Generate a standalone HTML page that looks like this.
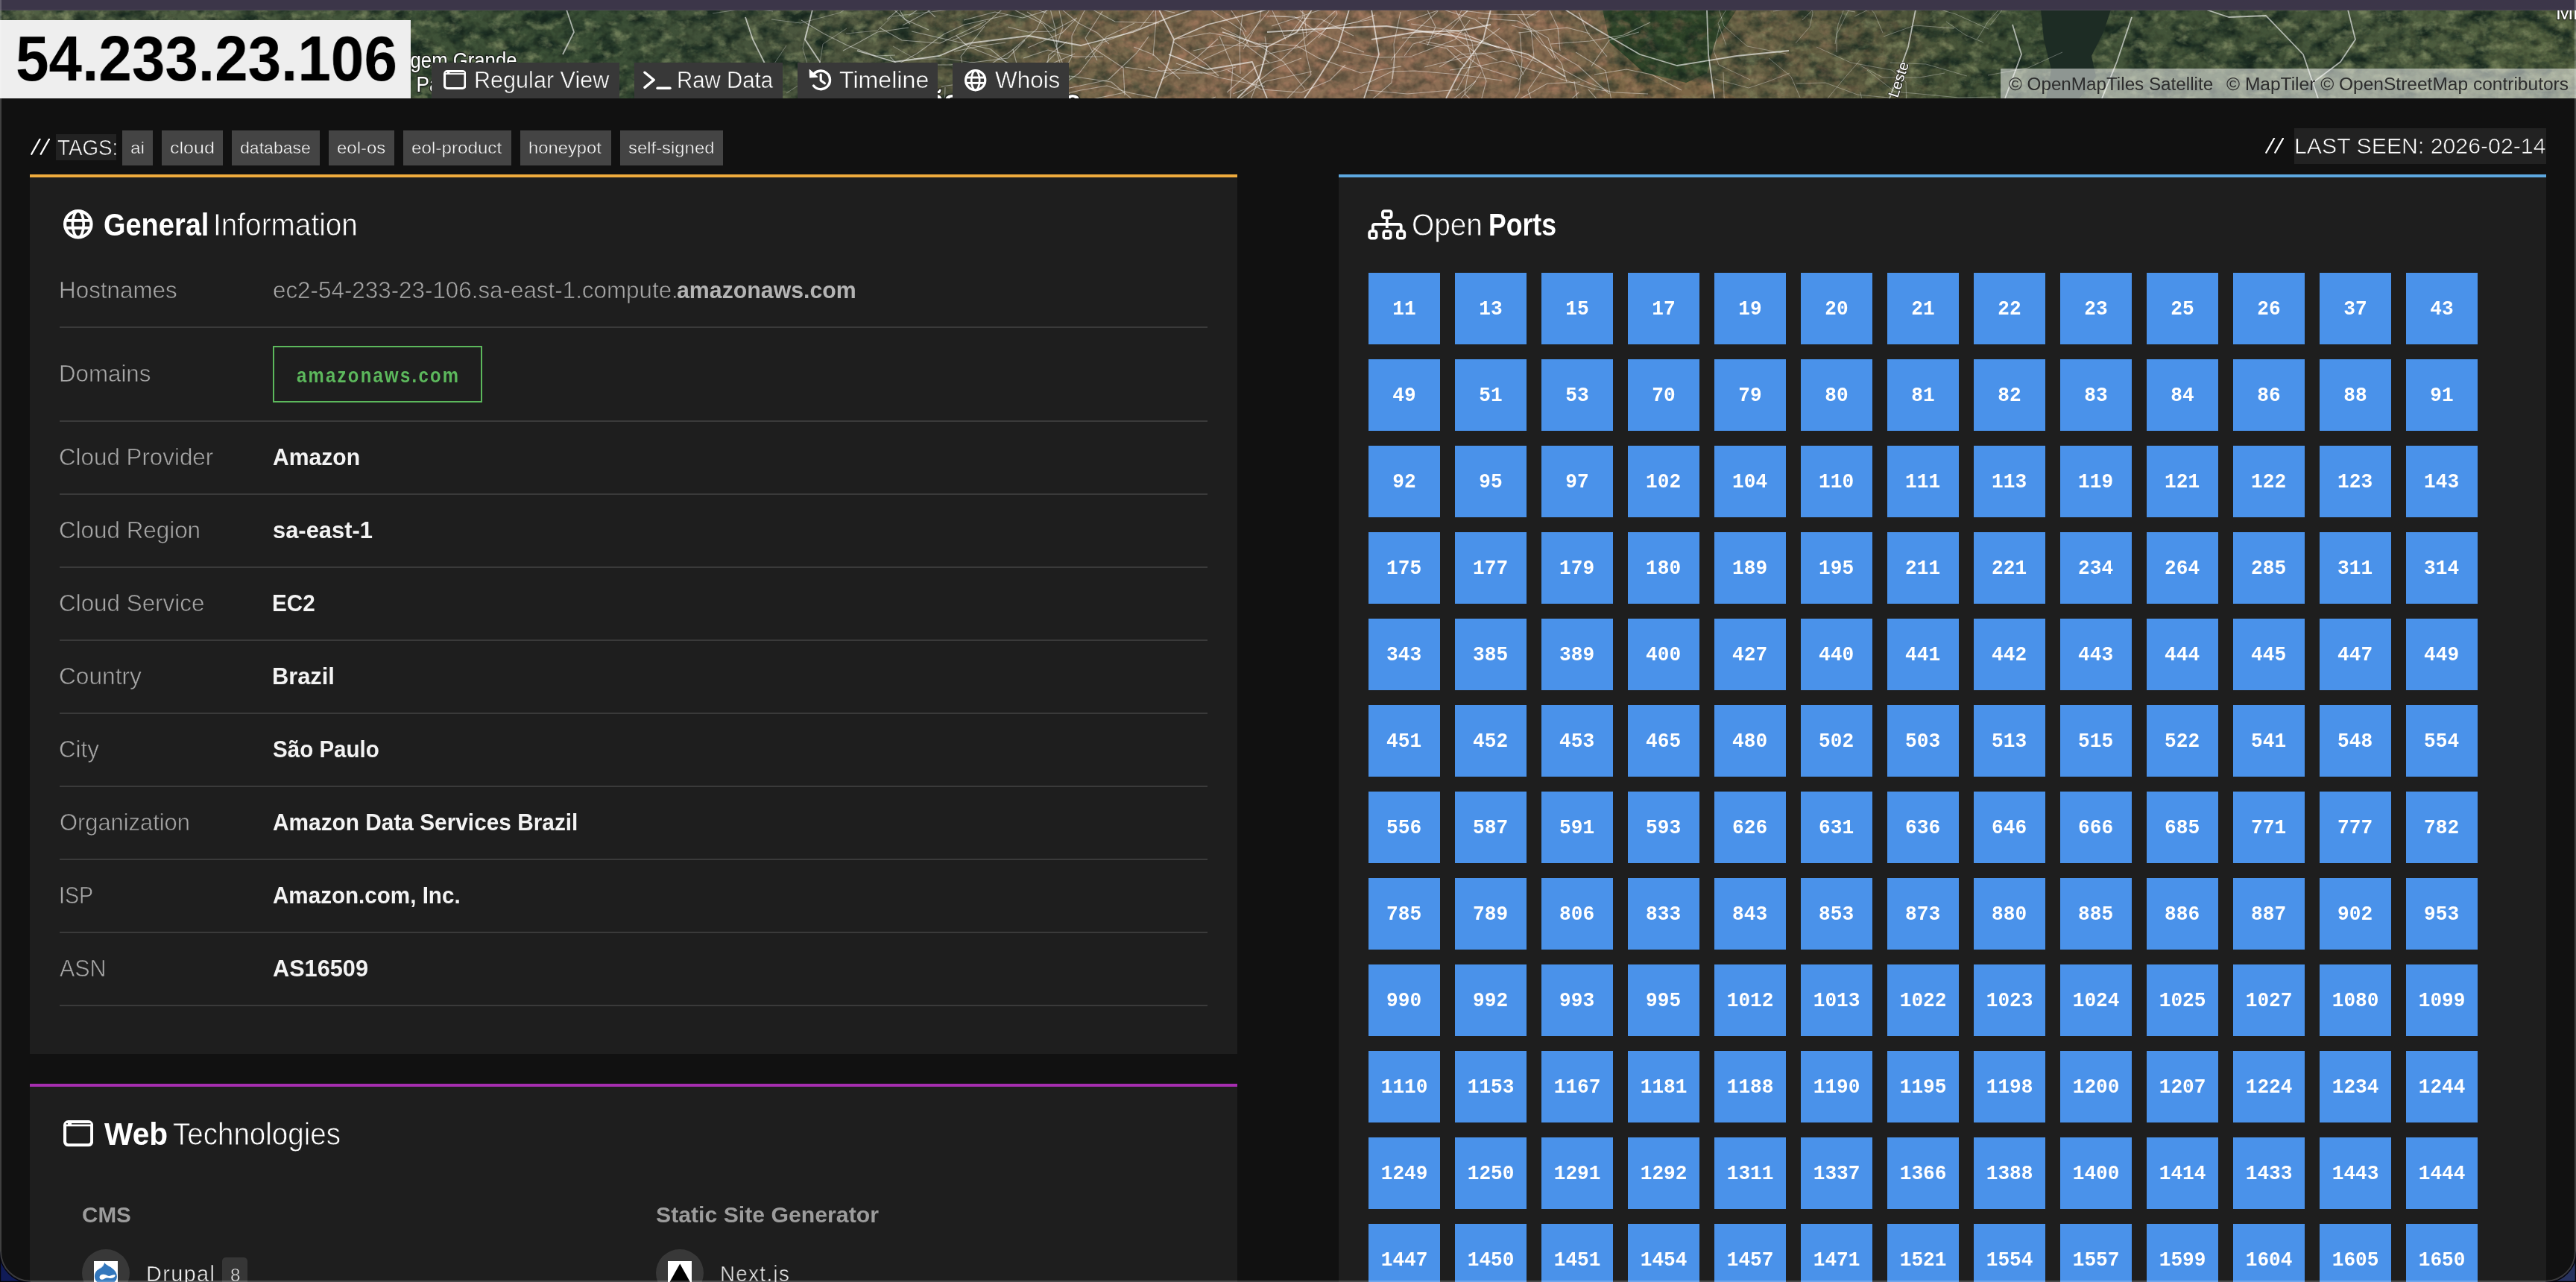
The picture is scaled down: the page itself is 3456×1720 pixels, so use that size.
<!DOCTYPE html>
<html lang="en"><head><meta charset="utf-8"><title>54.233.23.106</title>
<style>
html,body{margin:0;padding:0;background:#111;}
body{width:3456px;height:1720px;position:relative;overflow:hidden;font-family:"Liberation Sans",sans-serif;}
#w{position:absolute;left:0;top:0;width:3456px;height:1720px;will-change:transform;}
.a{position:absolute;}
.t{position:absolute;white-space:pre;line-height:1;transform-origin:0 0;}
.card{position:absolute;background:#1e1e1e;}
.hr{position:absolute;left:80px;width:1540px;height:2px;background:#3a3a3a;}
.tag{position:absolute;top:175px;height:47px;background:#444;}
.btn{position:absolute;top:84px;height:48px;background:#383838;}
.p{position:absolute;width:96px;height:96px;background:#4a92ea;color:#fff;font-family:"Liberation Mono",monospace;font-weight:700;font-size:28.4px;line-height:97px;text-align:center;}
.p b{display:inline-block;transform:scaleX(.92);}

</style></head><body><div id="w">
<svg class="a" style="left:0;top:13px" width="3456" height="119" viewBox="0 0 3456 119">
<defs><linearGradient id="mg" x1="0" y1="0" x2="1" y2="0">
<stop offset="0.0000" stop-color="#526044"/>
<stop offset="0.0868" stop-color="#4a5a3f"/>
<stop offset="0.1594" stop-color="#3f5238"/>
<stop offset="0.2315" stop-color="#394e35"/>
<stop offset="0.2778" stop-color="#42523a"/>
<stop offset="0.3067" stop-color="#4a563e"/>
<stop offset="0.3414" stop-color="#545a41"/>
<stop offset="0.3819" stop-color="#625e44"/>
<stop offset="0.4196" stop-color="#74664a"/>
<stop offset="0.4514" stop-color="#816b4f"/>
<stop offset="0.4919" stop-color="#886c52"/>
<stop offset="0.5498" stop-color="#8b6d54"/>
<stop offset="0.6019" stop-color="#876c51"/>
<stop offset="0.6250" stop-color="#76674a"/>
<stop offset="0.6539" stop-color="#686345"/>
<stop offset="0.6887" stop-color="#6a6346"/>
<stop offset="0.7234" stop-color="#5c5c40"/>
<stop offset="0.7523" stop-color="#4a563a"/>
<stop offset="0.7856" stop-color="#3e5036"/>
<stop offset="0.8247" stop-color="#44553a"/>
<stop offset="0.8681" stop-color="#415238"/>
<stop offset="0.9259" stop-color="#4a5a3e"/>
<stop offset="1.0000" stop-color="#52603f"/>
</linearGradient>
<linearGradient id="mk" x1="0" y1="0" x2="1" y2="0">
<stop offset="0.0000" stop-color="rgb(255,255,255)"/>
<stop offset="0.3328" stop-color="rgb(255,255,255)"/>
<stop offset="0.4196" stop-color="rgb(153,153,153)"/>
<stop offset="0.4514" stop-color="rgb(102,102,102)"/>
<stop offset="0.6019" stop-color="rgb(102,102,102)"/>
<stop offset="0.6366" stop-color="rgb(191,191,191)"/>
<stop offset="0.7378" stop-color="rgb(204,204,204)"/>
<stop offset="0.7668" stop-color="rgb(255,255,255)"/>
<stop offset="1.0000" stop-color="rgb(255,255,255)"/>
</linearGradient><mask id="dm"><rect width="3456" height="119" fill="url(#mk)"/></mask>
<filter id="nd" x="0" y="0" width="100%" height="100%" color-interpolation-filters="sRGB"><feTurbulence type="fractalNoise" baseFrequency="0.035 0.05" numOctaves="4" seed="11"/><feColorMatrix type="matrix" values="0 0 0 0 0.10  0 0 0 0 0.17  0 0 0 0 0.13  2.8 0 0 0 -1.22"/></filter>
<filter id="nl" x="0" y="0" width="100%" height="100%" color-interpolation-filters="sRGB"><feTurbulence type="fractalNoise" baseFrequency="0.05 0.07" numOctaves="4" seed="29"/><feColorMatrix type="matrix" values="0 0 0 0 0.60  0 0 0 0 0.64  0 0 0 0 0.46  0 3.0 0 0 -1.55"/></filter>
<filter id="nu" x="0" y="0" width="100%" height="100%" color-interpolation-filters="sRGB"><feTurbulence type="fractalNoise" baseFrequency="0.05 0.07" numOctaves="4" seed="31"/><feColorMatrix type="matrix" values="0 0 0 0 0.70  0 0 0 0 0.50  0 0 0 0 0.40  0 3.0 0 0 -1.5"/></filter>
<linearGradient id="mk2" x1="0" y1="0" x2="1" y2="0">
<stop offset="0.0000" stop-color="rgb(0,0,0)"/>
<stop offset="0.3328" stop-color="rgb(0,0,0)"/>
<stop offset="0.4051" stop-color="rgb(127,127,127)"/>
<stop offset="0.4514" stop-color="rgb(255,255,255)"/>
<stop offset="0.6076" stop-color="rgb(255,255,255)"/>
<stop offset="0.6510" stop-color="rgb(127,127,127)"/>
<stop offset="0.7234" stop-color="rgb(114,114,114)"/>
<stop offset="0.7668" stop-color="rgb(0,0,0)"/>
<stop offset="1.0000" stop-color="rgb(0,0,0)"/>
</linearGradient><mask id="um"><rect width="3456" height="119" fill="url(#mk2)"/></mask>
<linearGradient id="mk3" x1="0" y1="0" x2="1" y2="0">
<stop offset="0.0000" stop-color="rgb(255,255,255)"/>
<stop offset="0.3472" stop-color="rgb(255,255,255)"/>
<stop offset="0.4514" stop-color="rgb(38,38,38)"/>
<stop offset="0.6076" stop-color="rgb(38,38,38)"/>
<stop offset="0.6510" stop-color="rgb(153,153,153)"/>
<stop offset="0.7523" stop-color="rgb(255,255,255)"/>
<stop offset="1.0000" stop-color="rgb(255,255,255)"/>
</linearGradient><mask id="gm"><rect width="3456" height="119" fill="url(#mk3)"/></mask>
<filter id="ng" x="0" y="0" width="100%" height="100%" color-interpolation-filters="sRGB"><feTurbulence type="fractalNoise" baseFrequency="0.12" numOctaves="2" seed="5"/><feColorMatrix type="matrix" values="0 0 0 0 0  0 0 0 0 0  0 0 0 0 0  0 0 1.4 0 -0.6"/></filter>
</defs>
<rect width="3456" height="119" fill="url(#mg)"/>
<path d="M2150 119 L2150 70 L2290 95 L2330 119Z" fill="#7d6848"/>
<path d="M2150 0 L2330 0 L2300 45 L2290 85 L2262 98 L2205 84 L2160 44Z" fill="#2f4529"/>
<g mask="url(#dm)"><rect width="3456" height="119" filter="url(#nd)"/></g>
<g mask="url(#gm)"><rect width="3456" height="119" filter="url(#nl)" opacity=".55"/></g>
<g mask="url(#um)"><rect width="3456" height="119" filter="url(#nu)" opacity=".6"/></g>
<rect width="3456" height="119" filter="url(#ng)" opacity=".35"/>
<path d="M2738 0 L2832 0 L2822 30 L2806 62 L2812 90 L2790 119 L2745 119 L2752 80 L2742 40Z" fill="#1d2c24"/>
<polyline points="1150,55 1200,70 1260,62 1300,45 1380,35 1450,48 1520,30 1570,10 1600,0" fill="none" stroke="#fff" stroke-width="1.8" stroke-opacity="0.60" stroke-linejoin="round"/>
<polyline points="1555,0 1575,40 1568,70 1550,119" fill="none" stroke="#fff" stroke-width="1.8" stroke-opacity="0.60" stroke-linejoin="round"/>
<polyline points="1575,40 1620,20 1680,5 1700,0" fill="none" stroke="#fff" stroke-width="1.8" stroke-opacity="0.60" stroke-linejoin="round"/>
<polyline points="1568,60 1620,80 1680,70 1700,119" fill="none" stroke="#fff" stroke-width="1.8" stroke-opacity="0.60" stroke-linejoin="round"/>
<polyline points="1640,30 1700,50 1690,90 1660,119" fill="none" stroke="#fff" stroke-width="1.8" stroke-opacity="0.60" stroke-linejoin="round"/>
<polyline points="1700,50 1740,30 1760,0" fill="none" stroke="#fff" stroke-width="1.8" stroke-opacity="0.60" stroke-linejoin="round"/>
<polyline points="1810,0 1795,50 1770,90 1750,119" fill="none" stroke="#fff" stroke-width="1.8" stroke-opacity="0.60" stroke-linejoin="round"/>
<polyline points="1840,40 1900,30 1960,28 2000,20" fill="none" stroke="#fff" stroke-width="1.8" stroke-opacity="0.60" stroke-linejoin="round"/>
<polyline points="1840,0 1850,60 1830,119" fill="none" stroke="#fff" stroke-width="1.8" stroke-opacity="0.60" stroke-linejoin="round"/>
<polyline points="1700,30 1780,25 1860,22 1950,35 2050,60 2100,90" fill="none" stroke="#fff" stroke-width="1.8" stroke-opacity="0.60" stroke-linejoin="round"/>
<polyline points="2000,0 1990,40 1960,80 1940,119" fill="none" stroke="#fff" stroke-width="1.8" stroke-opacity="0.60" stroke-linejoin="round"/>
<polyline points="2100,0 2140,25 2200,60 2250,75 2330,62 2400,55" fill="none" stroke="#fff" stroke-width="1.8" stroke-opacity="0.60" stroke-linejoin="round"/>
<polyline points="2290,0 2292,60 2300,119" fill="none" stroke="#fff" stroke-width="1.8" stroke-opacity="0.60" stroke-linejoin="round"/>
<polyline points="2570,0 2560,50 2535,119" fill="none" stroke="#fff" stroke-width="1.8" stroke-opacity="0.60" stroke-linejoin="round"/>
<polyline points="2700,20 2712,60 2690,119" fill="none" stroke="#fff" stroke-width="1.8" stroke-opacity="0.60" stroke-linejoin="round"/>
<polyline points="2860,10 2840,70 2820,119" fill="none" stroke="#fff" stroke-width="1.8" stroke-opacity="0.60" stroke-linejoin="round"/>
<polyline points="2960,0 2990,10 3040,8 3090,60 3110,119" fill="none" stroke="#fff" stroke-width="1.8" stroke-opacity="0.60" stroke-linejoin="round"/>
<polyline points="3150,0 3160,40 3140,70 3100,100" fill="none" stroke="#fff" stroke-width="1.8" stroke-opacity="0.60" stroke-linejoin="round"/>
<polyline points="1000,10 1010,40 1030,80" fill="none" stroke="#fff" stroke-width="1.8" stroke-opacity="0.60" stroke-linejoin="round"/>
<polyline points="760,0 770,30 755,60" fill="none" stroke="#fff" stroke-width="1.8" stroke-opacity="0.60" stroke-linejoin="round"/>
<polyline points="1090,0 1080,40 1100,70 1085,119" fill="none" stroke="#fff" stroke-width="1.8" stroke-opacity="0.60" stroke-linejoin="round"/>
<polyline points="1614,67 1668,43 1699,6 1723,-27" fill="none" stroke="#fff" stroke-width="1.1" stroke-opacity="0.42" stroke-linejoin="round"/>
<polyline points="1359,53 1369,92 1424,121 1433,159 1433,181" fill="none" stroke="#fff" stroke-width="1.1" stroke-opacity="0.42" stroke-linejoin="round"/>
<polyline points="1194,63 1223,93 1229,121" fill="none" stroke="#fff" stroke-width="1.1" stroke-opacity="0.42" stroke-linejoin="round"/>
<polyline points="1747,23 1753,61 1759,87 1719,127" fill="none" stroke="#fff" stroke-width="1.1" stroke-opacity="0.42" stroke-linejoin="round"/>
<polyline points="1987,84 1976,101 1960,119" fill="none" stroke="#fff" stroke-width="1.1" stroke-opacity="0.42" stroke-linejoin="round"/>
<polyline points="1283,35 1298,49 1355,72" fill="none" stroke="#fff" stroke-width="1.1" stroke-opacity="0.42" stroke-linejoin="round"/>
<polyline points="1631,117 1602,129 1563,136" fill="none" stroke="#fff" stroke-width="1.1" stroke-opacity="0.42" stroke-linejoin="round"/>
<polyline points="1479,2 1456,38 1472,68" fill="none" stroke="#fff" stroke-width="1.1" stroke-opacity="0.42" stroke-linejoin="round"/>
<polyline points="1647,81 1692,107 1746,111 1784,95 1805,74" fill="none" stroke="#fff" stroke-width="1.1" stroke-opacity="0.42" stroke-linejoin="round"/>
<polyline points="2112,96 2117,125 2094,159" fill="none" stroke="#fff" stroke-width="1.1" stroke-opacity="0.42" stroke-linejoin="round"/>
<polyline points="1276,118 1321,137 1341,163 1372,173" fill="none" stroke="#fff" stroke-width="1.1" stroke-opacity="0.42" stroke-linejoin="round"/>
<polyline points="1791,2 1749,39 1718,68 1687,75 1646,111" fill="none" stroke="#fff" stroke-width="1.1" stroke-opacity="0.42" stroke-linejoin="round"/>
<polyline points="1965,30 1974,64 1968,94 1965,113 1983,130" fill="none" stroke="#fff" stroke-width="1.1" stroke-opacity="0.42" stroke-linejoin="round"/>
<polyline points="1672,30 1645,-9 1633,-34 1592,-62" fill="none" stroke="#fff" stroke-width="1.1" stroke-opacity="0.42" stroke-linejoin="round"/>
<polyline points="1246,27 1214,13 1202,-9 1169,-21 1143,-27" fill="none" stroke="#fff" stroke-width="1.1" stroke-opacity="0.42" stroke-linejoin="round"/>
<polyline points="1349,44 1319,48 1280,56" fill="none" stroke="#fff" stroke-width="1.1" stroke-opacity="0.42" stroke-linejoin="round"/>
<polyline points="1884,62 1896,46 1947,30 1972,36 2012,52" fill="none" stroke="#fff" stroke-width="1.1" stroke-opacity="0.42" stroke-linejoin="round"/>
<polyline points="1881,38 1923,36 1969,2" fill="none" stroke="#fff" stroke-width="1.1" stroke-opacity="0.42" stroke-linejoin="round"/>
<polyline points="1888,15 1938,-2 2001,6 2061,7" fill="none" stroke="#fff" stroke-width="1.1" stroke-opacity="0.42" stroke-linejoin="round"/>
<polyline points="2009,68 1988,58 1959,60 1931,77" fill="none" stroke="#fff" stroke-width="1.1" stroke-opacity="0.42" stroke-linejoin="round"/>
<polyline points="1580,39 1623,31 1650,36 1671,47 1703,71" fill="none" stroke="#fff" stroke-width="1.1" stroke-opacity="0.42" stroke-linejoin="round"/>
<polyline points="1401,83 1355,75 1329,53 1279,42 1223,29" fill="none" stroke="#fff" stroke-width="1.1" stroke-opacity="0.42" stroke-linejoin="round"/>
<polyline points="1509,111 1456,122 1424,143" fill="none" stroke="#fff" stroke-width="1.1" stroke-opacity="0.42" stroke-linejoin="round"/>
<polyline points="1954,109 1978,65 1975,44 1953,1" fill="none" stroke="#fff" stroke-width="1.1" stroke-opacity="0.42" stroke-linejoin="round"/>
<polyline points="1219,8 1253,-14 1315,-17" fill="none" stroke="#fff" stroke-width="1.1" stroke-opacity="0.42" stroke-linejoin="round"/>
<polyline points="1547,62 1551,14 1550,-6 1505,-39 1449,-41" fill="none" stroke="#fff" stroke-width="1.1" stroke-opacity="0.42" stroke-linejoin="round"/>
<polyline points="1728,37 1748,10 1747,-32" fill="none" stroke="#fff" stroke-width="1.1" stroke-opacity="0.42" stroke-linejoin="round"/>
<polyline points="1436,93 1426,73 1412,37 1399,19 1348,-6" fill="none" stroke="#fff" stroke-width="1.1" stroke-opacity="0.42" stroke-linejoin="round"/>
<polyline points="1426,85 1438,63 1438,35 1454,3 1483,-33" fill="none" stroke="#fff" stroke-width="1.1" stroke-opacity="0.42" stroke-linejoin="round"/>
<polyline points="1558,94 1606,64 1634,39" fill="none" stroke="#fff" stroke-width="1.1" stroke-opacity="0.42" stroke-linejoin="round"/>
<polyline points="1369,106 1433,112 1487,140 1533,161 1590,165" fill="none" stroke="#fff" stroke-width="1.1" stroke-opacity="0.42" stroke-linejoin="round"/>
<polyline points="1966,76 1941,52 1904,44" fill="none" stroke="#fff" stroke-width="1.1" stroke-opacity="0.42" stroke-linejoin="round"/>
<polyline points="2118,111 2093,134 2094,165 2091,207 2090,225" fill="none" stroke="#fff" stroke-width="1.1" stroke-opacity="0.42" stroke-linejoin="round"/>
<polyline points="1957,8 1977,-29 2016,-45" fill="none" stroke="#fff" stroke-width="1.1" stroke-opacity="0.42" stroke-linejoin="round"/>
<polyline points="2140,107 2078,88 2016,69 1982,76 1945,81" fill="none" stroke="#fff" stroke-width="1.1" stroke-opacity="0.42" stroke-linejoin="round"/>
<polyline points="1880,76 1826,85 1769,65 1739,48 1689,45" fill="none" stroke="#fff" stroke-width="1.1" stroke-opacity="0.42" stroke-linejoin="round"/>
<polyline points="1442,59 1398,78 1380,125" fill="none" stroke="#fff" stroke-width="1.1" stroke-opacity="0.42" stroke-linejoin="round"/>
<polyline points="1675,48 1667,28 1618,-4 1567,-34 1550,-61" fill="none" stroke="#fff" stroke-width="1.1" stroke-opacity="0.42" stroke-linejoin="round"/>
<polyline points="1416,59 1399,76 1387,92 1382,132" fill="none" stroke="#fff" stroke-width="1.1" stroke-opacity="0.42" stroke-linejoin="round"/>
<polyline points="2118,4 2130,31 2156,63" fill="none" stroke="#fff" stroke-width="1.1" stroke-opacity="0.42" stroke-linejoin="round"/>
<polyline points="1281,87 1313,120 1331,163 1377,182 1403,214" fill="none" stroke="#fff" stroke-width="1.1" stroke-opacity="0.42" stroke-linejoin="round"/>
<polyline points="1697,103 1635,91 1578,72" fill="none" stroke="#fff" stroke-width="1.1" stroke-opacity="0.42" stroke-linejoin="round"/>
<polyline points="1403,88 1407,61 1431,43" fill="none" stroke="#fff" stroke-width="1.1" stroke-opacity="0.42" stroke-linejoin="round"/>
<polyline points="2138,106 2166,111 2211,113" fill="none" stroke="#fff" stroke-width="1.1" stroke-opacity="0.42" stroke-linejoin="round"/>
<polyline points="2084,65 2060,29 2028,21" fill="none" stroke="#fff" stroke-width="1.1" stroke-opacity="0.42" stroke-linejoin="round"/>
<polyline points="1835,108 1888,113 1958,107" fill="none" stroke="#fff" stroke-width="1.1" stroke-opacity="0.42" stroke-linejoin="round"/>
<polyline points="1980,96 1947,122 1913,148" fill="none" stroke="#fff" stroke-width="1.1" stroke-opacity="0.42" stroke-linejoin="round"/>
<polyline points="1321,22 1289,63 1293,82" fill="none" stroke="#fff" stroke-width="1.1" stroke-opacity="0.42" stroke-linejoin="round"/>
<polyline points="2093,55 2090,24 2079,1 2053,-31" fill="none" stroke="#fff" stroke-width="1.1" stroke-opacity="0.42" stroke-linejoin="round"/>
<polyline points="1219,24 1177,30 1152,44 1131,55" fill="none" stroke="#fff" stroke-width="1.1" stroke-opacity="0.42" stroke-linejoin="round"/>
<polyline points="2037,95 2058,63 2054,27 2035,-12 2016,-28" fill="none" stroke="#fff" stroke-width="1.1" stroke-opacity="0.42" stroke-linejoin="round"/>
<polyline points="1893,19 1956,29 2008,50" fill="none" stroke="#fff" stroke-width="1.1" stroke-opacity="0.42" stroke-linejoin="round"/>
<polyline points="1915,48 1926,23 1905,-20" fill="none" stroke="#fff" stroke-width="1.1" stroke-opacity="0.42" stroke-linejoin="round"/>
<polyline points="2131,107 2160,140 2199,167 2231,193" fill="none" stroke="#fff" stroke-width="1.1" stroke-opacity="0.42" stroke-linejoin="round"/>
<polyline points="1554,119 1513,111 1485,102 1450,108 1405,118" fill="none" stroke="#fff" stroke-width="1.1" stroke-opacity="0.42" stroke-linejoin="round"/>
<polyline points="1911,77 1973,62 2019,54 2064,71" fill="none" stroke="#fff" stroke-width="1.1" stroke-opacity="0.42" stroke-linejoin="round"/>
<polyline points="2135,76 2159,41 2199,30" fill="none" stroke="#fff" stroke-width="1.1" stroke-opacity="0.42" stroke-linejoin="round"/>
<polyline points="2081,46 2133,42 2178,34 2214,17" fill="none" stroke="#fff" stroke-width="1.1" stroke-opacity="0.42" stroke-linejoin="round"/>
<polyline points="1480,63 1442,63 1406,54 1373,65" fill="none" stroke="#fff" stroke-width="1.1" stroke-opacity="0.42" stroke-linejoin="round"/>
<polyline points="1221,19 1196,-3 1158,-26 1139,-51" fill="none" stroke="#fff" stroke-width="1.1" stroke-opacity="0.42" stroke-linejoin="round"/>
<polyline points="1946,27 1965,5 2003,-33 2041,-52" fill="none" stroke="#fff" stroke-width="1.1" stroke-opacity="0.42" stroke-linejoin="round"/>
<polyline points="2120,97 2076,99 2026,127" fill="none" stroke="#fff" stroke-width="1.1" stroke-opacity="0.42" stroke-linejoin="round"/>
<polyline points="1522,18 1485,36 1456,66" fill="none" stroke="#fff" stroke-width="1.1" stroke-opacity="0.42" stroke-linejoin="round"/>
<polyline points="1583,93 1547,60 1521,50" fill="none" stroke="#fff" stroke-width="1.1" stroke-opacity="0.42" stroke-linejoin="round"/>
<polyline points="2037,93 1989,78 1949,50 1913,43" fill="none" stroke="#fff" stroke-width="1.1" stroke-opacity="0.42" stroke-linejoin="round"/>
<polyline points="1410,113 1360,85 1332,86 1292,99 1263,103" fill="none" stroke="#fff" stroke-width="1.1" stroke-opacity="0.42" stroke-linejoin="round"/>
<polyline points="1700,9 1736,9 1769,31 1804,46 1830,57" fill="none" stroke="#fff" stroke-width="1.1" stroke-opacity="0.42" stroke-linejoin="round"/>
<polyline points="2015,95 1957,87 1898,82 1867,83 1815,108" fill="none" stroke="#fff" stroke-width="1.1" stroke-opacity="0.42" stroke-linejoin="round"/>
<polyline points="1753,35 1750,6 1709,-29" fill="none" stroke="#fff" stroke-width="1.1" stroke-opacity="0.42" stroke-linejoin="round"/>
<polyline points="1255,10 1227,-15 1223,-33 1195,-75" fill="none" stroke="#fff" stroke-width="1.1" stroke-opacity="0.42" stroke-linejoin="round"/>
<polyline points="1760,83 1698,96 1658,123 1625,162 1614,193" fill="none" stroke="#fff" stroke-width="1.1" stroke-opacity="0.42" stroke-linejoin="round"/>
<polyline points="1751,107 1722,70 1694,51 1638,24" fill="none" stroke="#fff" stroke-width="1.1" stroke-opacity="0.42" stroke-linejoin="round"/>
<polyline points="2039,30 2042,68 2038,111 2019,137" fill="none" stroke="#fff" stroke-width="1.1" stroke-opacity="0.42" stroke-linejoin="round"/>
<polyline points="1555,18 1496,16 1466,-0" fill="none" stroke="#fff" stroke-width="1.1" stroke-opacity="0.42" stroke-linejoin="round"/>
<polyline points="1201,61 1175,62 1137,48 1105,32 1075,14" fill="none" stroke="#fff" stroke-width="1.1" stroke-opacity="0.42" stroke-linejoin="round"/>
<polyline points="1443,13 1425,31 1379,51" fill="none" stroke="#fff" stroke-width="1.1" stroke-opacity="0.42" stroke-linejoin="round"/>
<polyline points="1416,26 1408,-5 1384,-45 1365,-62 1326,-95" fill="none" stroke="#fff" stroke-width="1.1" stroke-opacity="0.42" stroke-linejoin="round"/>
<polyline points="1250,74 1275,74 1303,71 1352,65 1375,41" fill="none" stroke="#fff" stroke-width="1.1" stroke-opacity="0.42" stroke-linejoin="round"/>
<polyline points="1190,13 1210,-4 1254,-29" fill="none" stroke="#fff" stroke-width="1.1" stroke-opacity="0.42" stroke-linejoin="round"/>
<polyline points="1488,46 1472,31 1447,18 1408,-14" fill="none" stroke="#fff" stroke-width="1.1" stroke-opacity="0.42" stroke-linejoin="round"/>
<polyline points="1352,7 1294,20 1266,33 1230,59 1194,79" fill="none" stroke="#fff" stroke-width="1.1" stroke-opacity="0.42" stroke-linejoin="round"/>
<polyline points="1668,53 1690,14 1695,-20 1720,-47" fill="none" stroke="#fff" stroke-width="1.1" stroke-opacity="0.42" stroke-linejoin="round"/>
<polyline points="1430,106 1487,94 1525,58 1541,36" fill="none" stroke="#fff" stroke-width="1.1" stroke-opacity="0.42" stroke-linejoin="round"/>
<polyline points="1309,95 1367,107 1428,88 1491,97 1520,121" fill="none" stroke="#fff" stroke-width="1.1" stroke-opacity="0.42" stroke-linejoin="round"/>
<polyline points="1417,50 1426,23 1416,-21 1410,-58" fill="none" stroke="#fff" stroke-width="1.1" stroke-opacity="0.42" stroke-linejoin="round"/>
<polyline points="2133,32 2102,24 2037,31" fill="none" stroke="#fff" stroke-width="1.1" stroke-opacity="0.42" stroke-linejoin="round"/>
<polyline points="1323,15 1299,27 1261,45 1210,41 1180,24" fill="none" stroke="#fff" stroke-width="1.1" stroke-opacity="0.42" stroke-linejoin="round"/>
<polyline points="1938,50 1982,47 2012,25" fill="none" stroke="#fff" stroke-width="1.1" stroke-opacity="0.42" stroke-linejoin="round"/>
<polyline points="1654,113 1679,103 1710,79 1746,65" fill="none" stroke="#fff" stroke-width="1.1" stroke-opacity="0.42" stroke-linejoin="round"/>
<polyline points="1840,13 1781,24 1753,48 1698,60" fill="none" stroke="#fff" stroke-width="1.1" stroke-opacity="0.42" stroke-linejoin="round"/>
<polyline points="1636,35 1654,77 1650,123" fill="none" stroke="#fff" stroke-width="1.1" stroke-opacity="0.42" stroke-linejoin="round"/>
<polyline points="1326,75 1356,56 1391,26 1401,4 1425,-18" fill="none" stroke="#fff" stroke-width="1.1" stroke-opacity="0.42" stroke-linejoin="round"/>
<polyline points="2087,67 2077,38 2036,15 1983,11" fill="none" stroke="#fff" stroke-width="1.1" stroke-opacity="0.42" stroke-linejoin="round"/>
<polyline points="1352,23 1379,30 1411,29 1445,11" fill="none" stroke="#fff" stroke-width="1.1" stroke-opacity="0.42" stroke-linejoin="round"/>
<polyline points="1250,110 1232,130 1234,169 1238,216 1230,256" fill="none" stroke="#fff" stroke-width="1.1" stroke-opacity="0.42" stroke-linejoin="round"/>
<polyline points="1769,38 1794,6 1783,-21" fill="none" stroke="#fff" stroke-width="1.1" stroke-opacity="0.42" stroke-linejoin="round"/>
<polyline points="1509,77 1548,83 1577,80 1613,85" fill="none" stroke="#fff" stroke-width="1.1" stroke-opacity="0.42" stroke-linejoin="round"/>
<polyline points="1697,36 1700,57 1684,105 1669,143 1644,160" fill="none" stroke="#fff" stroke-width="1.1" stroke-opacity="0.42" stroke-linejoin="round"/>
<polyline points="2087,75 2124,95 2158,109" fill="none" stroke="#fff" stroke-width="1.1" stroke-opacity="0.42" stroke-linejoin="round"/>
<polyline points="1268,104 1267,144 1286,177" fill="none" stroke="#fff" stroke-width="1.1" stroke-opacity="0.42" stroke-linejoin="round"/>
<polyline points="1704,8 1773,13 1816,35" fill="none" stroke="#fff" stroke-width="1.1" stroke-opacity="0.42" stroke-linejoin="round"/>
<polyline points="1298,98 1306,133 1295,155 1283,173" fill="none" stroke="#fff" stroke-width="1.1" stroke-opacity="0.42" stroke-linejoin="round"/>
<polyline points="1211,21 1257,-4 1323,-9 1376,-6 1405,5" fill="none" stroke="#fff" stroke-width="1.1" stroke-opacity="0.42" stroke-linejoin="round"/>
<polyline points="1576,4 1544,-3 1509,-11" fill="none" stroke="#fff" stroke-width="1.1" stroke-opacity="0.42" stroke-linejoin="round"/>
<polyline points="1725,40 1706,-1 1684,-30" fill="none" stroke="#fff" stroke-width="1.1" stroke-opacity="0.42" stroke-linejoin="round"/>
<polyline points="1278,41 1315,25 1356,-10 1394,-48 1444,-74" fill="none" stroke="#fff" stroke-width="1.1" stroke-opacity="0.42" stroke-linejoin="round"/>
<polyline points="1293,14 1335,3 1372,11 1425,-5" fill="none" stroke="#fff" stroke-width="1.1" stroke-opacity="0.42" stroke-linejoin="round"/>
<polyline points="2044,87 2022,45 1979,13 1920,-5" fill="none" stroke="#fff" stroke-width="1.1" stroke-opacity="0.42" stroke-linejoin="round"/>
<polyline points="2114,57 2154,82 2163,127" fill="none" stroke="#fff" stroke-width="1.1" stroke-opacity="0.42" stroke-linejoin="round"/>
<polyline points="2139,87 2182,80 2216,87 2256,108" fill="none" stroke="#fff" stroke-width="1.1" stroke-opacity="0.42" stroke-linejoin="round"/>
<polyline points="2047,12 2086,-11 2114,-30" fill="none" stroke="#fff" stroke-width="1.1" stroke-opacity="0.42" stroke-linejoin="round"/>
<polyline points="1879,3 1870,46 1871,74 1868,93" fill="none" stroke="#fff" stroke-width="1.1" stroke-opacity="0.42" stroke-linejoin="round"/>
<polyline points="1210,107 1222,148 1207,192 1222,235" fill="none" stroke="#fff" stroke-width="1.1" stroke-opacity="0.42" stroke-linejoin="round"/>
<polyline points="1845,7 1822,16 1769,28 1721,35" fill="none" stroke="#fff" stroke-width="1.1" stroke-opacity="0.42" stroke-linejoin="round"/>
<polyline points="1407,113 1448,85 1479,44 1529,25 1556,-9" fill="none" stroke="#fff" stroke-width="1.1" stroke-opacity="0.42" stroke-linejoin="round"/>
<polyline points="2080,53 2095,72 2102,97" fill="none" stroke="#fff" stroke-width="1.1" stroke-opacity="0.42" stroke-linejoin="round"/>
<polyline points="1871,60 1867,98 1834,126 1824,152" fill="none" stroke="#fff" stroke-width="1.1" stroke-opacity="0.42" stroke-linejoin="round"/>
<polyline points="2070,79 2050,108 2066,153 2119,181 2169,176" fill="none" stroke="#fff" stroke-width="1.1" stroke-opacity="0.42" stroke-linejoin="round"/>
<polyline points="1696,50 1637,47 1601,55" fill="none" stroke="#fff" stroke-width="1.1" stroke-opacity="0.42" stroke-linejoin="round"/>
<polyline points="1706,22 1766,2 1790,-4" fill="none" stroke="#fff" stroke-width="1.1" stroke-opacity="0.42" stroke-linejoin="round"/>
<polyline points="2036,7 2055,31 2069,47 2117,75 2159,113" fill="none" stroke="#fff" stroke-width="1.1" stroke-opacity="0.42" stroke-linejoin="round"/>
<polyline points="1895,63 1850,64 1802,56" fill="none" stroke="#fff" stroke-width="1.1" stroke-opacity="0.42" stroke-linejoin="round"/>
<polyline points="1426,85 1419,61 1416,28 1378,3" fill="none" stroke="#fff" stroke-width="1.1" stroke-opacity="0.42" stroke-linejoin="round"/>
<polyline points="1866,68 1891,36 1929,2" fill="none" stroke="#fff" stroke-width="1.1" stroke-opacity="0.42" stroke-linejoin="round"/>
<polyline points="1664,86 1663,40 1667,6" fill="none" stroke="#fff" stroke-width="1.1" stroke-opacity="0.42" stroke-linejoin="round"/>
<polyline points="1940,28 1979,57 1994,96 1983,137" fill="none" stroke="#fff" stroke-width="1.1" stroke-opacity="0.42" stroke-linejoin="round"/>
<polyline points="1658,77 1628,85 1566,85 1540,77" fill="none" stroke="#fff" stroke-width="1.1" stroke-opacity="0.42" stroke-linejoin="round"/>
<polyline points="1574,43 1617,72 1635,89" fill="none" stroke="#fff" stroke-width="1.1" stroke-opacity="0.42" stroke-linejoin="round"/>
<polyline points="1895,62 1952,40 1972,14" fill="none" stroke="#fff" stroke-width="1.1" stroke-opacity="0.42" stroke-linejoin="round"/>
<polyline points="1466,51 1507,78 1509,115" fill="none" stroke="#fff" stroke-width="1.1" stroke-opacity="0.42" stroke-linejoin="round"/>
<polyline points="2418,14 2451,-19 2465,-43 2507,-56" fill="none" stroke="#fff" stroke-width="1.0" stroke-opacity="0.30" stroke-linejoin="round"/>
<polyline points="2316,48 2305,18 2327,-18" fill="none" stroke="#fff" stroke-width="1.0" stroke-opacity="0.30" stroke-linejoin="round"/>
<polyline points="2670,21 2695,-11 2696,-37" fill="none" stroke="#fff" stroke-width="1.0" stroke-opacity="0.30" stroke-linejoin="round"/>
<polyline points="2373,65 2403,90 2415,118" fill="none" stroke="#fff" stroke-width="1.0" stroke-opacity="0.30" stroke-linejoin="round"/>
<polyline points="2496,75 2526,91 2575,91 2609,85" fill="none" stroke="#fff" stroke-width="1.0" stroke-opacity="0.30" stroke-linejoin="round"/>
<polyline points="2307,22 2299,55 2306,74 2348,94" fill="none" stroke="#fff" stroke-width="1.0" stroke-opacity="0.30" stroke-linejoin="round"/>
<polyline points="2611,16 2637,34 2661,44" fill="none" stroke="#fff" stroke-width="1.0" stroke-opacity="0.30" stroke-linejoin="round"/>
<polyline points="2653,39 2667,16 2690,-9 2693,-39 2677,-59" fill="none" stroke="#fff" stroke-width="1.0" stroke-opacity="0.30" stroke-linejoin="round"/>
<polyline points="2464,57 2464,33 2480,1 2472,-21 2445,-50" fill="none" stroke="#fff" stroke-width="1.0" stroke-opacity="0.30" stroke-linejoin="round"/>
<polyline points="2462,46 2466,20 2474,-1" fill="none" stroke="#fff" stroke-width="1.0" stroke-opacity="0.30" stroke-linejoin="round"/>
<polyline points="2639,89 2584,73 2536,71" fill="none" stroke="#fff" stroke-width="1.0" stroke-opacity="0.30" stroke-linejoin="round"/>
<polyline points="2668,26 2624,6 2576,-8 2523,-8 2488,9" fill="none" stroke="#fff" stroke-width="1.0" stroke-opacity="0.30" stroke-linejoin="round"/>
<polyline points="2496,111 2500,132 2512,160 2547,183 2574,189" fill="none" stroke="#fff" stroke-width="1.0" stroke-opacity="0.30" stroke-linejoin="round"/>
<polyline points="2437,50 2483,71 2538,81 2557,97 2558,136" fill="none" stroke="#fff" stroke-width="1.0" stroke-opacity="0.30" stroke-linejoin="round"/>
<polyline points="2409,45 2428,23 2432,5 2428,-34" fill="none" stroke="#fff" stroke-width="1.0" stroke-opacity="0.30" stroke-linejoin="round"/>
<polyline points="2526,31 2515,5 2486,-29" fill="none" stroke="#fff" stroke-width="1.0" stroke-opacity="0.30" stroke-linejoin="round"/>
<polyline points="2312,84 2313,117 2319,144" fill="none" stroke="#fff" stroke-width="1.0" stroke-opacity="0.30" stroke-linejoin="round"/>
<polyline points="2410,99 2449,98 2492,114 2534,118" fill="none" stroke="#fff" stroke-width="1.0" stroke-opacity="0.30" stroke-linejoin="round"/>
<polyline points="2489,3 2442,-5 2417,-2 2379,2" fill="none" stroke="#fff" stroke-width="1.0" stroke-opacity="0.30" stroke-linejoin="round"/>
<polyline points="2396,59 2344,49 2313,22 2306,-1 2286,-13" fill="none" stroke="#fff" stroke-width="1.0" stroke-opacity="0.30" stroke-linejoin="round"/>
<polyline points="2622,25 2569,21 2527,36" fill="none" stroke="#fff" stroke-width="1.0" stroke-opacity="0.30" stroke-linejoin="round"/>
<polyline points="2496,67 2471,96 2447,125 2432,158" fill="none" stroke="#fff" stroke-width="1.0" stroke-opacity="0.30" stroke-linejoin="round"/>
<polyline points="2667,88 2721,78 2767,57" fill="none" stroke="#fff" stroke-width="1.0" stroke-opacity="0.30" stroke-linejoin="round"/>
<polyline points="2505,81 2542,110 2576,113 2628,118 2678,117" fill="none" stroke="#fff" stroke-width="1.0" stroke-opacity="0.30" stroke-linejoin="round"/>
<polyline points="2401,85 2373,96 2346,105 2301,93" fill="none" stroke="#fff" stroke-width="1.0" stroke-opacity="0.30" stroke-linejoin="round"/>
<polyline points="1025,88 1043,112 1050,134" fill="none" stroke="#fff" stroke-width="1.0" stroke-opacity="0.30" stroke-linejoin="round"/>
<polyline points="1037,2 1003,-2 956,5" fill="none" stroke="#fff" stroke-width="1.0" stroke-opacity="0.30" stroke-linejoin="round"/>
<polyline points="1077,81 1088,100 1119,111" fill="none" stroke="#fff" stroke-width="1.0" stroke-opacity="0.30" stroke-linejoin="round"/>
<polyline points="1146,118 1155,156 1143,176 1155,203" fill="none" stroke="#fff" stroke-width="1.0" stroke-opacity="0.30" stroke-linejoin="round"/>
<polyline points="1174,77 1173,114 1145,133 1106,146 1076,146" fill="none" stroke="#fff" stroke-width="1.0" stroke-opacity="0.30" stroke-linejoin="round"/>
<polyline points="1035,13 1074,18 1127,4 1160,-17" fill="none" stroke="#fff" stroke-width="1.0" stroke-opacity="0.30" stroke-linejoin="round"/>
<polyline points="1055,48 1039,72 1038,90" fill="none" stroke="#fff" stroke-width="1.0" stroke-opacity="0.30" stroke-linejoin="round"/>
<polyline points="1013,106 1028,130 1072,150" fill="none" stroke="#fff" stroke-width="1.0" stroke-opacity="0.30" stroke-linejoin="round"/>
<polyline points="1198,49 1228,66 1272,66 1318,73" fill="none" stroke="#fff" stroke-width="1.0" stroke-opacity="0.30" stroke-linejoin="round"/>
<polyline points="1055,112 1098,84 1104,46 1136,25" fill="none" stroke="#fff" stroke-width="1.0" stroke-opacity="0.30" stroke-linejoin="round"/>
<polyline points="1135,32 1177,28 1197,9 1222,6 1274,-0" fill="none" stroke="#fff" stroke-width="1.0" stroke-opacity="0.30" stroke-linejoin="round"/>
<polyline points="1158,88 1107,91 1085,79 1077,52 1082,29" fill="none" stroke="#fff" stroke-width="1.0" stroke-opacity="0.30" stroke-linejoin="round"/>
<text transform="translate(693.5,78) scale(.887,1)" text-anchor="end" style="font-family:'Liberation Sans',sans-serif;fill:#fff;stroke:#1a1a1a;stroke-width:3px;paint-order:stroke;stroke-opacity:.7;font-size:29px">Vargem Grande</text>
<text transform="translate(558.6,109.6) scale(.9,1)" style="font-family:'Liberation Sans',sans-serif;fill:#fff;stroke:#1a1a1a;stroke-width:3px;paint-order:stroke;stroke-opacity:.7;font-size:29px">Paulista</text>
<text x="1222" y="134" style="font-family:'Liberation Sans',sans-serif;fill:#fff;stroke:#1a1a1a;stroke-width:3px;paint-order:stroke;stroke-opacity:.7;font-size:36px;font-weight:700">São</text>
<text x="1352" y="134" style="font-family:'Liberation Sans',sans-serif;fill:#fff;stroke:#1a1a1a;stroke-width:3px;paint-order:stroke;stroke-opacity:.7;font-size:36px;font-weight:700">Paulo</text>
<text x="3429" y="13.4" style="font-family:'Liberation Sans',sans-serif;fill:#fff;stroke:#1a1a1a;stroke-width:3px;paint-order:stroke;stroke-opacity:.7;font-size:28px;stroke-width:2.5px">Mi</text>
<text transform="translate(2546,119) rotate(-72)" style="font-family:'Liberation Sans',sans-serif;fill:#fff;stroke:#1a1a1a;stroke-width:3px;paint-order:stroke;stroke-opacity:.7;font-size:20px;stroke-width:2px">Leste</text>
</svg>
<div class="a" style="left:0;top:0;width:3456px;height:14px;background:#3c3649;border-bottom:1.5px solid #4b4657;box-sizing:border-box"></div>
<div class="a" style="left:0;top:27px;width:551px;height:105px;background:#eee"></div>
<div class="btn" style="left:579px;width:252px"></div>
<div class="btn" style="left:851px;width:199px"></div>
<div class="btn" style="left:1070px;width:188px"></div>
<div class="btn" style="left:1278px;width:156px"></div>
<div class="a" style="left:75px;top:180px;width:81px;height:35px;background:#222"></div>
<div class="tag" style="left:164px;width:41px"></div>
<div class="tag" style="left:217px;width:82px"></div>
<div class="tag" style="left:311px;width:118px"></div>
<div class="tag" style="left:441px;width:88px"></div>
<div class="tag" style="left:541px;width:145px"></div>
<div class="tag" style="left:698px;width:122px"></div>
<div class="tag" style="left:832px;width:138px"></div>
<div class="a" style="left:3078px;top:172px;width:338px;height:48px;background:#222"></div>
<div class="card" style="left:40px;top:234px;width:1620px;height:1180px;border-top:4px solid #efab3d;box-sizing:border-box"></div>
<div class="card" style="left:40px;top:1454px;width:1620px;height:300px;border-top:4px solid #a62eb0;box-sizing:border-box"></div>
<div class="card" style="left:1796px;top:234px;width:1620px;height:1500px;border-top:4px solid #5da8e0;box-sizing:border-box"></div>
<div class="hr" style="top:438px"></div>
<div class="hr" style="top:564px"></div>
<div class="hr" style="top:662px"></div>
<div class="hr" style="top:760px"></div>
<div class="hr" style="top:858px"></div>
<div class="hr" style="top:956px"></div>
<div class="hr" style="top:1054px"></div>
<div class="hr" style="top:1152px"></div>
<div class="hr" style="top:1250px"></div>
<div class="hr" style="top:1348px"></div>
<div class="a" style="left:366px;top:464px;width:281px;height:76px;border:2px solid #5cb85c;box-sizing:border-box"></div>
<div class="a" style="left:110px;top:1676px;width:64px;height:64px;border-radius:32px;background:#383838"></div>
<div class="a" style="left:880px;top:1676px;width:64px;height:64px;border-radius:32px;background:#383838"></div>
<div class="a" style="left:298px;top:1687px;width:34px;height:44px;border-radius:5px;background:#363636"></div>
<div class="a" style="left:2684px;top:92px;width:772px;height:40px;background:rgba(255,255,255,.5)"></div>
<svg class="a" style="left:594.5px;top:94px" width="30.5" height="26" viewBox="0 0 30.5 26" ><rect x="1.55" y="1.55" width="27.4" height="22.9" rx="3.5" fill="none" stroke="#fff" stroke-width="3.1"/><path d="M1.55 6 V3.5 Q1.55 1.55 3.5 1.55 H27 Q28.95 1.55 28.95 3.5 V6 Z" fill="#fff"/><rect x="8.37" y="3.038" width="19.34" height="1.116" fill="#383838"/><rect x="2.945" y="3.038" width="1.55" height="1.116" fill="#383838"/></svg>
<svg class="a" style="left:85px;top:1503.3px" width="40.2" height="35.3" viewBox="0 0 40.2 35.3" ><rect x="2.05" y="2.05" width="36.1" height="31.2" rx="4.5" fill="none" stroke="#fff" stroke-width="4.1"/><path d="M2.05 8.2 V4.5 Q2.05 2.05 4.5 2.05 H35.7 Q38.15 2.05 38.15 4.5 V8.2 Z" fill="#fff"/><rect x="11.07" y="4.018" width="25.44" height="1.476" fill="#1e1e1e"/><rect x="3.895" y="4.018" width="2.05" height="1.476" fill="#1e1e1e"/></svg>
<svg class="a" style="left:862.5px;top:95px" width="40" height="26" viewBox="0 0 40 26" ><polyline points="2,2.2 14.2,12.2 2,22.4" fill="none" stroke="#fff" stroke-width="3.4" stroke-linecap="round" stroke-linejoin="round"/><line x1="19" y1="23.2" x2="36" y2="23.2" stroke="#fff" stroke-width="3.4" stroke-linecap="round"/></svg>
<svg class="a" style="left:1084.5px;top:91.6px" width="32" height="31" viewBox="0 0 32 31" ><path d="M5.77 8.88 A12.30 12.30 0 1 1 6.51 22.97" fill="none" stroke="#fff" stroke-width="3.4" stroke-linecap="round"/><path d="M1.2 1.6 L1.6 12 L11.6 11.2 Z" fill="#fff" stroke="#fff" stroke-width="1.2" stroke-linejoin="round"/><polyline points="16.20,8.20 16.20,16.00 21.40,19.80" fill="none" stroke="#fff" stroke-width="3.2" stroke-linecap="round" stroke-linejoin="round"/></svg>
<svg class="a" style="left:1293.1px;top:91.6px" width="31.4" height="31.4" viewBox="0 0 31.4 31.4" ><circle cx="15.7" cy="15.7" r="13.1" fill="none" stroke="#fff" stroke-width="3.2"/><ellipse cx="15.7" cy="15.7" rx="5.5125" ry="13.1" fill="none" stroke="#fff" stroke-width="2.7"/><line x1="3.6" y1="12.025" x2="27.8" y2="12.025" stroke="#fff" stroke-width="2.9"/><line x1="3.6" y1="19.375" x2="27.8" y2="19.375" stroke="#fff" stroke-width="2.9"/></svg>
<svg class="a" style="left:84.4px;top:280.05px" width="41.6" height="41.6" viewBox="0 0 41.6 41.6" ><circle cx="20.8" cy="20.8" r="17.65" fill="none" stroke="#fff" stroke-width="4.3"/><ellipse cx="20.8" cy="20.8" rx="7.425" ry="17.65" fill="none" stroke="#fff" stroke-width="3.6"/><line x1="4.15" y1="15.85" x2="37.45" y2="15.85" stroke="#fff" stroke-width="3.9"/><line x1="4.15" y1="25.75" x2="37.45" y2="25.75" stroke="#fff" stroke-width="3.9"/></svg>
<svg class="a" style="left:1835px;top:280.6px" width="52" height="41" viewBox="0 0 52 41" ><rect x="19.9" y="2.2" width="11.8" height="8.9" rx="2.5" fill="none" stroke="#fff" stroke-width="3.8"/><line x1="25.8" y1="12" x2="25.8" y2="25" stroke="#fff" stroke-width="3.8"/><path d="M6.9 28 V22.6 Q6.9 19.9 9.6 19.9 H42 Q44.7 19.9 44.7 22.6 V28" fill="none" stroke="#fff" stroke-width="3.8"/><rect x="2.15" y="29.05" width="9.5" height="9.7" rx="2.5" fill="none" stroke="#fff" stroke-width="3.7"/><rect x="21.25" y="29.05" width="9.5" height="9.7" rx="2.5" fill="none" stroke="#fff" stroke-width="3.7"/><rect x="39.85" y="29.05" width="9.5" height="9.7" rx="2.5" fill="none" stroke="#fff" stroke-width="3.7"/></svg>
<svg class="a" style="left:40.7px;top:186px" width="26.2" height="21.6" viewBox="0 0 26.2 21.6" ><line x1="0.8" y1="21.6" x2="12.955" y2="0" stroke="#fff" stroke-width="2.3"/><line x1="13.245" y1="21.6" x2="25.4" y2="0" stroke="#fff" stroke-width="2.3"/></svg>
<svg class="a" style="left:3038.8px;top:185px" width="25.2" height="20.6" viewBox="0 0 25.2 20.6" ><line x1="0.8" y1="20.6" x2="12.43" y2="0" stroke="#fff" stroke-width="2.2"/><line x1="12.77" y1="20.6" x2="24.4" y2="0" stroke="#fff" stroke-width="2.2"/></svg>
<svg class="a" style="left:126px;top:1692px" width="32" height="32" viewBox="0 0 32 32" ><rect x="0" y="0" width="32" height="32" fill="#fff"/><path d="M14.3 1.8 C15.6 5.2 20 6.2 24 9.2 C28.6 12.6 30.9 16.2 30.9 20.6 C30.9 28 24 32 16 32 C8 32 0.9 28 0.9 20.6 C0.9 15 4.6 11.4 8.6 9 C11.6 7 13.8 5 14.3 1.8Z" fill="#3277bd"/><path d="M4.6 11.2 C7 8.8 10.6 7.6 13.2 5 C12.8 7.4 9 9.4 5.2 11.8Z" fill="#dfeaf6"/><path d="M7.5 21.5 C7.5 18.6 11 17.2 14.5 18 C17.5 18.7 19 20.3 21.5 19.8 C24 19.3 26.5 17.8 28.2 18.6 C29.4 19.4 28 21.6 25.5 22.6 C22 24 19 21.8 16.5 22.6 C13.5 23.6 12.8 25 10.6 24.8 C8.6 24.6 7.5 23.4 7.5 21.5Z" fill="#fff"/></svg>
<svg class="a" style="left:896px;top:1692px" width="32" height="32" viewBox="0 0 32 32" ><rect x="0" y="0" width="32" height="32" fill="#fff"/><path d="M16.2 3.6 L31 30 L1.4 30Z" fill="#000"/></svg>
<div class="p" style="left:1836px;top:366px"><b>11</b></div>
<div class="p" style="left:1952px;top:366px"><b>13</b></div>
<div class="p" style="left:2068px;top:366px"><b>15</b></div>
<div class="p" style="left:2184px;top:366px"><b>17</b></div>
<div class="p" style="left:2300px;top:366px"><b>19</b></div>
<div class="p" style="left:2416px;top:366px"><b>20</b></div>
<div class="p" style="left:2532px;top:366px"><b>21</b></div>
<div class="p" style="left:2648px;top:366px"><b>22</b></div>
<div class="p" style="left:2764px;top:366px"><b>23</b></div>
<div class="p" style="left:2880px;top:366px"><b>25</b></div>
<div class="p" style="left:2996px;top:366px"><b>26</b></div>
<div class="p" style="left:3112px;top:366px"><b>37</b></div>
<div class="p" style="left:3228px;top:366px"><b>43</b></div>
<div class="p" style="left:1836px;top:482px"><b>49</b></div>
<div class="p" style="left:1952px;top:482px"><b>51</b></div>
<div class="p" style="left:2068px;top:482px"><b>53</b></div>
<div class="p" style="left:2184px;top:482px"><b>70</b></div>
<div class="p" style="left:2300px;top:482px"><b>79</b></div>
<div class="p" style="left:2416px;top:482px"><b>80</b></div>
<div class="p" style="left:2532px;top:482px"><b>81</b></div>
<div class="p" style="left:2648px;top:482px"><b>82</b></div>
<div class="p" style="left:2764px;top:482px"><b>83</b></div>
<div class="p" style="left:2880px;top:482px"><b>84</b></div>
<div class="p" style="left:2996px;top:482px"><b>86</b></div>
<div class="p" style="left:3112px;top:482px"><b>88</b></div>
<div class="p" style="left:3228px;top:482px"><b>91</b></div>
<div class="p" style="left:1836px;top:598px"><b>92</b></div>
<div class="p" style="left:1952px;top:598px"><b>95</b></div>
<div class="p" style="left:2068px;top:598px"><b>97</b></div>
<div class="p" style="left:2184px;top:598px"><b>102</b></div>
<div class="p" style="left:2300px;top:598px"><b>104</b></div>
<div class="p" style="left:2416px;top:598px"><b>110</b></div>
<div class="p" style="left:2532px;top:598px"><b>111</b></div>
<div class="p" style="left:2648px;top:598px"><b>113</b></div>
<div class="p" style="left:2764px;top:598px"><b>119</b></div>
<div class="p" style="left:2880px;top:598px"><b>121</b></div>
<div class="p" style="left:2996px;top:598px"><b>122</b></div>
<div class="p" style="left:3112px;top:598px"><b>123</b></div>
<div class="p" style="left:3228px;top:598px"><b>143</b></div>
<div class="p" style="left:1836px;top:714px"><b>175</b></div>
<div class="p" style="left:1952px;top:714px"><b>177</b></div>
<div class="p" style="left:2068px;top:714px"><b>179</b></div>
<div class="p" style="left:2184px;top:714px"><b>180</b></div>
<div class="p" style="left:2300px;top:714px"><b>189</b></div>
<div class="p" style="left:2416px;top:714px"><b>195</b></div>
<div class="p" style="left:2532px;top:714px"><b>211</b></div>
<div class="p" style="left:2648px;top:714px"><b>221</b></div>
<div class="p" style="left:2764px;top:714px"><b>234</b></div>
<div class="p" style="left:2880px;top:714px"><b>264</b></div>
<div class="p" style="left:2996px;top:714px"><b>285</b></div>
<div class="p" style="left:3112px;top:714px"><b>311</b></div>
<div class="p" style="left:3228px;top:714px"><b>314</b></div>
<div class="p" style="left:1836px;top:830px"><b>343</b></div>
<div class="p" style="left:1952px;top:830px"><b>385</b></div>
<div class="p" style="left:2068px;top:830px"><b>389</b></div>
<div class="p" style="left:2184px;top:830px"><b>400</b></div>
<div class="p" style="left:2300px;top:830px"><b>427</b></div>
<div class="p" style="left:2416px;top:830px"><b>440</b></div>
<div class="p" style="left:2532px;top:830px"><b>441</b></div>
<div class="p" style="left:2648px;top:830px"><b>442</b></div>
<div class="p" style="left:2764px;top:830px"><b>443</b></div>
<div class="p" style="left:2880px;top:830px"><b>444</b></div>
<div class="p" style="left:2996px;top:830px"><b>445</b></div>
<div class="p" style="left:3112px;top:830px"><b>447</b></div>
<div class="p" style="left:3228px;top:830px"><b>449</b></div>
<div class="p" style="left:1836px;top:946px"><b>451</b></div>
<div class="p" style="left:1952px;top:946px"><b>452</b></div>
<div class="p" style="left:2068px;top:946px"><b>453</b></div>
<div class="p" style="left:2184px;top:946px"><b>465</b></div>
<div class="p" style="left:2300px;top:946px"><b>480</b></div>
<div class="p" style="left:2416px;top:946px"><b>502</b></div>
<div class="p" style="left:2532px;top:946px"><b>503</b></div>
<div class="p" style="left:2648px;top:946px"><b>513</b></div>
<div class="p" style="left:2764px;top:946px"><b>515</b></div>
<div class="p" style="left:2880px;top:946px"><b>522</b></div>
<div class="p" style="left:2996px;top:946px"><b>541</b></div>
<div class="p" style="left:3112px;top:946px"><b>548</b></div>
<div class="p" style="left:3228px;top:946px"><b>554</b></div>
<div class="p" style="left:1836px;top:1062px"><b>556</b></div>
<div class="p" style="left:1952px;top:1062px"><b>587</b></div>
<div class="p" style="left:2068px;top:1062px"><b>591</b></div>
<div class="p" style="left:2184px;top:1062px"><b>593</b></div>
<div class="p" style="left:2300px;top:1062px"><b>626</b></div>
<div class="p" style="left:2416px;top:1062px"><b>631</b></div>
<div class="p" style="left:2532px;top:1062px"><b>636</b></div>
<div class="p" style="left:2648px;top:1062px"><b>646</b></div>
<div class="p" style="left:2764px;top:1062px"><b>666</b></div>
<div class="p" style="left:2880px;top:1062px"><b>685</b></div>
<div class="p" style="left:2996px;top:1062px"><b>771</b></div>
<div class="p" style="left:3112px;top:1062px"><b>777</b></div>
<div class="p" style="left:3228px;top:1062px"><b>782</b></div>
<div class="p" style="left:1836px;top:1178px"><b>785</b></div>
<div class="p" style="left:1952px;top:1178px"><b>789</b></div>
<div class="p" style="left:2068px;top:1178px"><b>806</b></div>
<div class="p" style="left:2184px;top:1178px"><b>833</b></div>
<div class="p" style="left:2300px;top:1178px"><b>843</b></div>
<div class="p" style="left:2416px;top:1178px"><b>853</b></div>
<div class="p" style="left:2532px;top:1178px"><b>873</b></div>
<div class="p" style="left:2648px;top:1178px"><b>880</b></div>
<div class="p" style="left:2764px;top:1178px"><b>885</b></div>
<div class="p" style="left:2880px;top:1178px"><b>886</b></div>
<div class="p" style="left:2996px;top:1178px"><b>887</b></div>
<div class="p" style="left:3112px;top:1178px"><b>902</b></div>
<div class="p" style="left:3228px;top:1178px"><b>953</b></div>
<div class="p" style="left:1836px;top:1294px"><b>990</b></div>
<div class="p" style="left:1952px;top:1294px"><b>992</b></div>
<div class="p" style="left:2068px;top:1294px"><b>993</b></div>
<div class="p" style="left:2184px;top:1294px"><b>995</b></div>
<div class="p" style="left:2300px;top:1294px"><b>1012</b></div>
<div class="p" style="left:2416px;top:1294px"><b>1013</b></div>
<div class="p" style="left:2532px;top:1294px"><b>1022</b></div>
<div class="p" style="left:2648px;top:1294px"><b>1023</b></div>
<div class="p" style="left:2764px;top:1294px"><b>1024</b></div>
<div class="p" style="left:2880px;top:1294px"><b>1025</b></div>
<div class="p" style="left:2996px;top:1294px"><b>1027</b></div>
<div class="p" style="left:3112px;top:1294px"><b>1080</b></div>
<div class="p" style="left:3228px;top:1294px"><b>1099</b></div>
<div class="p" style="left:1836px;top:1410px"><b>1110</b></div>
<div class="p" style="left:1952px;top:1410px"><b>1153</b></div>
<div class="p" style="left:2068px;top:1410px"><b>1167</b></div>
<div class="p" style="left:2184px;top:1410px"><b>1181</b></div>
<div class="p" style="left:2300px;top:1410px"><b>1188</b></div>
<div class="p" style="left:2416px;top:1410px"><b>1190</b></div>
<div class="p" style="left:2532px;top:1410px"><b>1195</b></div>
<div class="p" style="left:2648px;top:1410px"><b>1198</b></div>
<div class="p" style="left:2764px;top:1410px"><b>1200</b></div>
<div class="p" style="left:2880px;top:1410px"><b>1207</b></div>
<div class="p" style="left:2996px;top:1410px"><b>1224</b></div>
<div class="p" style="left:3112px;top:1410px"><b>1234</b></div>
<div class="p" style="left:3228px;top:1410px"><b>1244</b></div>
<div class="p" style="left:1836px;top:1526px"><b>1249</b></div>
<div class="p" style="left:1952px;top:1526px"><b>1250</b></div>
<div class="p" style="left:2068px;top:1526px"><b>1291</b></div>
<div class="p" style="left:2184px;top:1526px"><b>1292</b></div>
<div class="p" style="left:2300px;top:1526px"><b>1311</b></div>
<div class="p" style="left:2416px;top:1526px"><b>1337</b></div>
<div class="p" style="left:2532px;top:1526px"><b>1366</b></div>
<div class="p" style="left:2648px;top:1526px"><b>1388</b></div>
<div class="p" style="left:2764px;top:1526px"><b>1400</b></div>
<div class="p" style="left:2880px;top:1526px"><b>1414</b></div>
<div class="p" style="left:2996px;top:1526px"><b>1433</b></div>
<div class="p" style="left:3112px;top:1526px"><b>1443</b></div>
<div class="p" style="left:3228px;top:1526px"><b>1444</b></div>
<div class="p" style="left:1836px;top:1642px"><b>1447</b></div>
<div class="p" style="left:1952px;top:1642px"><b>1450</b></div>
<div class="p" style="left:2068px;top:1642px"><b>1451</b></div>
<div class="p" style="left:2184px;top:1642px"><b>1454</b></div>
<div class="p" style="left:2300px;top:1642px"><b>1457</b></div>
<div class="p" style="left:2416px;top:1642px"><b>1471</b></div>
<div class="p" style="left:2532px;top:1642px"><b>1521</b></div>
<div class="p" style="left:2648px;top:1642px"><b>1554</b></div>
<div class="p" style="left:2764px;top:1642px"><b>1557</b></div>
<div class="p" style="left:2880px;top:1642px"><b>1599</b></div>
<div class="p" style="left:2996px;top:1642px"><b>1604</b></div>
<div class="p" style="left:3112px;top:1642px"><b>1605</b></div>
<div class="p" style="left:3228px;top:1642px"><b>1650</b></div>
<span class="t" style="left:21.21px;top:35.20px;font-size:86px;color:#000;font-weight:700;transform:scaleX(0.9307);">54.233.23.106</span>
<span class="t" style="left:636.03px;top:91.56px;font-size:31px;color:#fff;-webkit-text-stroke:0.5px #383838;transform:scaleX(0.9863);">Regular View</span>
<span class="t" style="left:907.80px;top:91.56px;font-size:31px;color:#fff;-webkit-text-stroke:0.5px #383838;transform:scaleX(0.9485);">Raw Data</span>
<span class="t" style="left:1125.96px;top:91.56px;font-size:31px;color:#fff;-webkit-text-stroke:0.5px #383838;transform:scaleX(1.0368);">Timeline</span>
<span class="t" style="left:1334.80px;top:91.56px;font-size:31px;color:#fff;-webkit-text-stroke:0.5px #383838;transform:scaleX(1.0141);">Whois</span>
<span class="t" style="left:76.55px;top:182.71px;font-size:29.4px;color:#fff;-webkit-text-stroke:0.6px #222;transform:scaleX(0.9451);">TAGS:</span>
<span class="t" style="left:175.23px;top:187.00px;font-size:22.8px;color:#f4f4f4;-webkit-text-stroke:0.4px #444;transform:scaleX(1.0733);">ai</span>
<span class="t" style="left:228.20px;top:187.00px;font-size:22.8px;color:#f4f4f4;-webkit-text-stroke:0.4px #444;transform:scaleX(1.0981);">cloud</span>
<span class="t" style="left:322.29px;top:187.00px;font-size:22.8px;color:#f4f4f4;-webkit-text-stroke:0.4px #444;transform:scaleX(1.0120);">database</span>
<span class="t" style="left:452.25px;top:187.00px;font-size:22.8px;color:#f4f4f4;-webkit-text-stroke:0.4px #444;transform:scaleX(1.0517);">eol-os</span>
<span class="t" style="left:552.24px;top:187.00px;font-size:22.8px;color:#f4f4f4;-webkit-text-stroke:0.4px #444;transform:scaleX(1.0628);">eol-product</span>
<span class="t" style="left:709.26px;top:187.00px;font-size:22.8px;color:#f4f4f4;-webkit-text-stroke:0.4px #444;transform:scaleX(1.0441);">honeypot</span>
<span class="t" style="left:843.25px;top:187.00px;font-size:22.8px;color:#f4f4f4;-webkit-text-stroke:0.4px #444;transform:scaleX(1.0472);">self-signed</span>
<span class="t" style="left:3077.73px;top:182.08px;font-size:29.2px;color:#fff;-webkit-text-stroke:0.6px #222;transform:scaleX(1.0365);">LAST SEEN: 2026-02-14</span>
<span class="t" style="left:139.49px;top:281.35px;font-size:42px;color:#fff;font-weight:700;transform:scaleX(0.9033);">General</span>
<span class="t" style="left:286.01px;top:281.35px;font-size:42px;color:#fff;-webkit-text-stroke:0.8px #1e1e1e;transform:scaleX(0.9227);">Information</span>
<span class="t" style="left:1893.95px;top:281.35px;font-size:42px;color:#fff;-webkit-text-stroke:0.8px #1e1e1e;transform:scaleX(0.9235);">Open</span>
<span class="t" style="left:1997.36px;top:281.35px;font-size:42px;color:#fff;font-weight:700;transform:scaleX(0.8476);">Ports</span>
<span class="t" style="left:139.90px;top:1500.55px;font-size:42px;color:#fff;font-weight:700;transform:scaleX(0.9686);">Web</span>
<span class="t" style="left:231.88px;top:1500.55px;font-size:42px;color:#fff;-webkit-text-stroke:0.8px #1e1e1e;transform:scaleX(0.9177);">Technologies</span>
<span class="t" style="left:78.66px;top:372.91px;font-size:32px;color:#a6a6a6;-webkit-text-stroke:0.6px #1e1e1e;transform:scaleX(0.9810);">Hostnames</span>
<span class="t" style="left:365.72px;top:372.91px;font-size:32px;color:#a6a6a6;-webkit-text-stroke:0.6px #1e1e1e;transform:scaleX(0.9799);">ec2-54-233-23-106.sa-east-1.compute.</span>
<span class="t" style="left:908.05px;top:372.91px;font-size:32px;color:#b4b4b4;font-weight:700;transform:scaleX(0.9466);">amazonaws.com</span>
<span class="t" style="left:78.67px;top:484.91px;font-size:32px;color:#a6a6a6;-webkit-text-stroke:0.6px #1e1e1e;transform:scaleX(0.9770);">Domains</span>
<span class="t" style="left:397.52px;top:491.14px;font-size:27px;color:#5cb85c;font-weight:700;letter-spacing:2.6px;transform:scaleX(0.8831);">amazonaws.com</span>
<span class="t" style="left:78.84px;top:596.91px;font-size:32px;color:#a6a6a6;-webkit-text-stroke:0.6px #1e1e1e;transform:scaleX(0.9789);">Cloud Provider</span>
<span class="t" style="left:365.76px;top:596.91px;font-size:32px;color:#f3f3f3;font-weight:700;transform:scaleX(0.9402);">Amazon</span>
<span class="t" style="left:78.84px;top:694.91px;font-size:32px;color:#a6a6a6;-webkit-text-stroke:0.6px #1e1e1e;transform:scaleX(0.9800);">Cloud Region</span>
<span class="t" style="left:365.73px;top:694.91px;font-size:32px;color:#f3f3f3;font-weight:700;transform:scaleX(0.9657);">sa-east-1</span>
<span class="t" style="left:78.84px;top:792.91px;font-size:32px;color:#a6a6a6;-webkit-text-stroke:0.6px #1e1e1e;transform:scaleX(0.9806);">Cloud Service</span>
<span class="t" style="left:364.85px;top:792.91px;font-size:32px;color:#f3f3f3;font-weight:700;transform:scaleX(0.9254);">EC2</span>
<span class="t" style="left:78.82px;top:890.91px;font-size:32px;color:#a6a6a6;-webkit-text-stroke:0.6px #1e1e1e;transform:scaleX(0.9891);">Country</span>
<span class="t" style="left:364.77px;top:890.91px;font-size:32px;color:#f3f3f3;font-weight:700;transform:scaleX(0.9627);">Brazil</span>
<span class="t" style="left:78.85px;top:988.91px;font-size:32px;color:#a6a6a6;-webkit-text-stroke:0.6px #1e1e1e;transform:scaleX(0.9755);">City</span>
<span class="t" style="left:365.78px;top:988.91px;font-size:32px;color:#f3f3f3;font-weight:700;transform:scaleX(0.9235);">São Paulo</span>
<span class="t" style="left:79.84px;top:1086.91px;font-size:32px;color:#a6a6a6;-webkit-text-stroke:0.6px #1e1e1e;transform:scaleX(0.9642);">Organization</span>
<span class="t" style="left:365.77px;top:1086.91px;font-size:32px;color:#f3f3f3;font-weight:700;transform:scaleX(0.9319);">Amazon Data Services Brazil</span>
<span class="t" style="left:79.11px;top:1184.91px;font-size:32px;color:#a6a6a6;-webkit-text-stroke:0.6px #1e1e1e;transform:scaleX(0.8957);">ISP</span>
<span class="t" style="left:365.78px;top:1184.91px;font-size:32px;color:#f3f3f3;font-weight:700;transform:scaleX(0.9249);">Amazon.com, Inc.</span>
<span class="t" style="left:80.40px;top:1282.91px;font-size:32px;color:#a6a6a6;-webkit-text-stroke:0.6px #1e1e1e;transform:scaleX(0.9508);">ASN</span>
<span class="t" style="left:365.74px;top:1282.91px;font-size:32px;color:#f3f3f3;font-weight:700;transform:scaleX(0.9588);">AS16509</span>
<span class="t" style="left:109.98px;top:1616.05px;font-size:29px;color:#9c9c9c;font-weight:700;transform:scaleX(1.0210);">CMS</span>
<span class="t" style="left:879.66px;top:1616.05px;font-size:29px;color:#9c9c9c;font-weight:700;transform:scaleX(1.0421);">Static Site Generator</span>
<span class="t" style="left:195.95px;top:1694.33px;font-size:29.5px;color:#eee;letter-spacing:1.5px;-webkit-text-stroke:0.5px #1e1e1e;transform:scaleX(0.9733);">Drupal</span>
<span class="t" style="left:308.60px;top:1698.98px;font-size:24px;color:#eee;-webkit-text-stroke:0.5px #363636;transform:scaleX(1.0020);">8</span>
<span class="t" style="left:965.73px;top:1694.33px;font-size:29.5px;color:#eee;letter-spacing:1.5px;-webkit-text-stroke:0.5px #1e1e1e;transform:scaleX(0.9354);">Next.js</span>
<span class="t" style="left:2694.70px;top:101.51px;font-size:23.5px;color:#2c2c2c;transform:scaleX(1.0309);">© OpenMapTiles Satellite</span>
<span class="t" style="left:2987.00px;top:101.51px;font-size:23.5px;color:#2c2c2c;transform:scaleX(1.0433);">© MapTiler © OpenStreetMap contributors</span>
<svg class="a" style="left:0;top:0" width="3456" height="1720" viewBox="0 0 3456 1720">
<path d="M0 1720 V1679 A41 41 0 0 0 41 1720 Z" fill="#101b57" stroke="#05050c" stroke-width="2.5"/>
<path d="M3456 1720 V1679 A41 41 0 0 1 3415 1720 Z" fill="#27325e" stroke="#05050c" stroke-width="2.5"/>
<path d="M1 0 V1679 A40 40 0 0 0 41 1719 H3415 A40 40 0 0 0 3455 1679 V0" fill="none" stroke="#fff" stroke-opacity=".2" stroke-width="2"/>
</svg>
</div></body></html>
